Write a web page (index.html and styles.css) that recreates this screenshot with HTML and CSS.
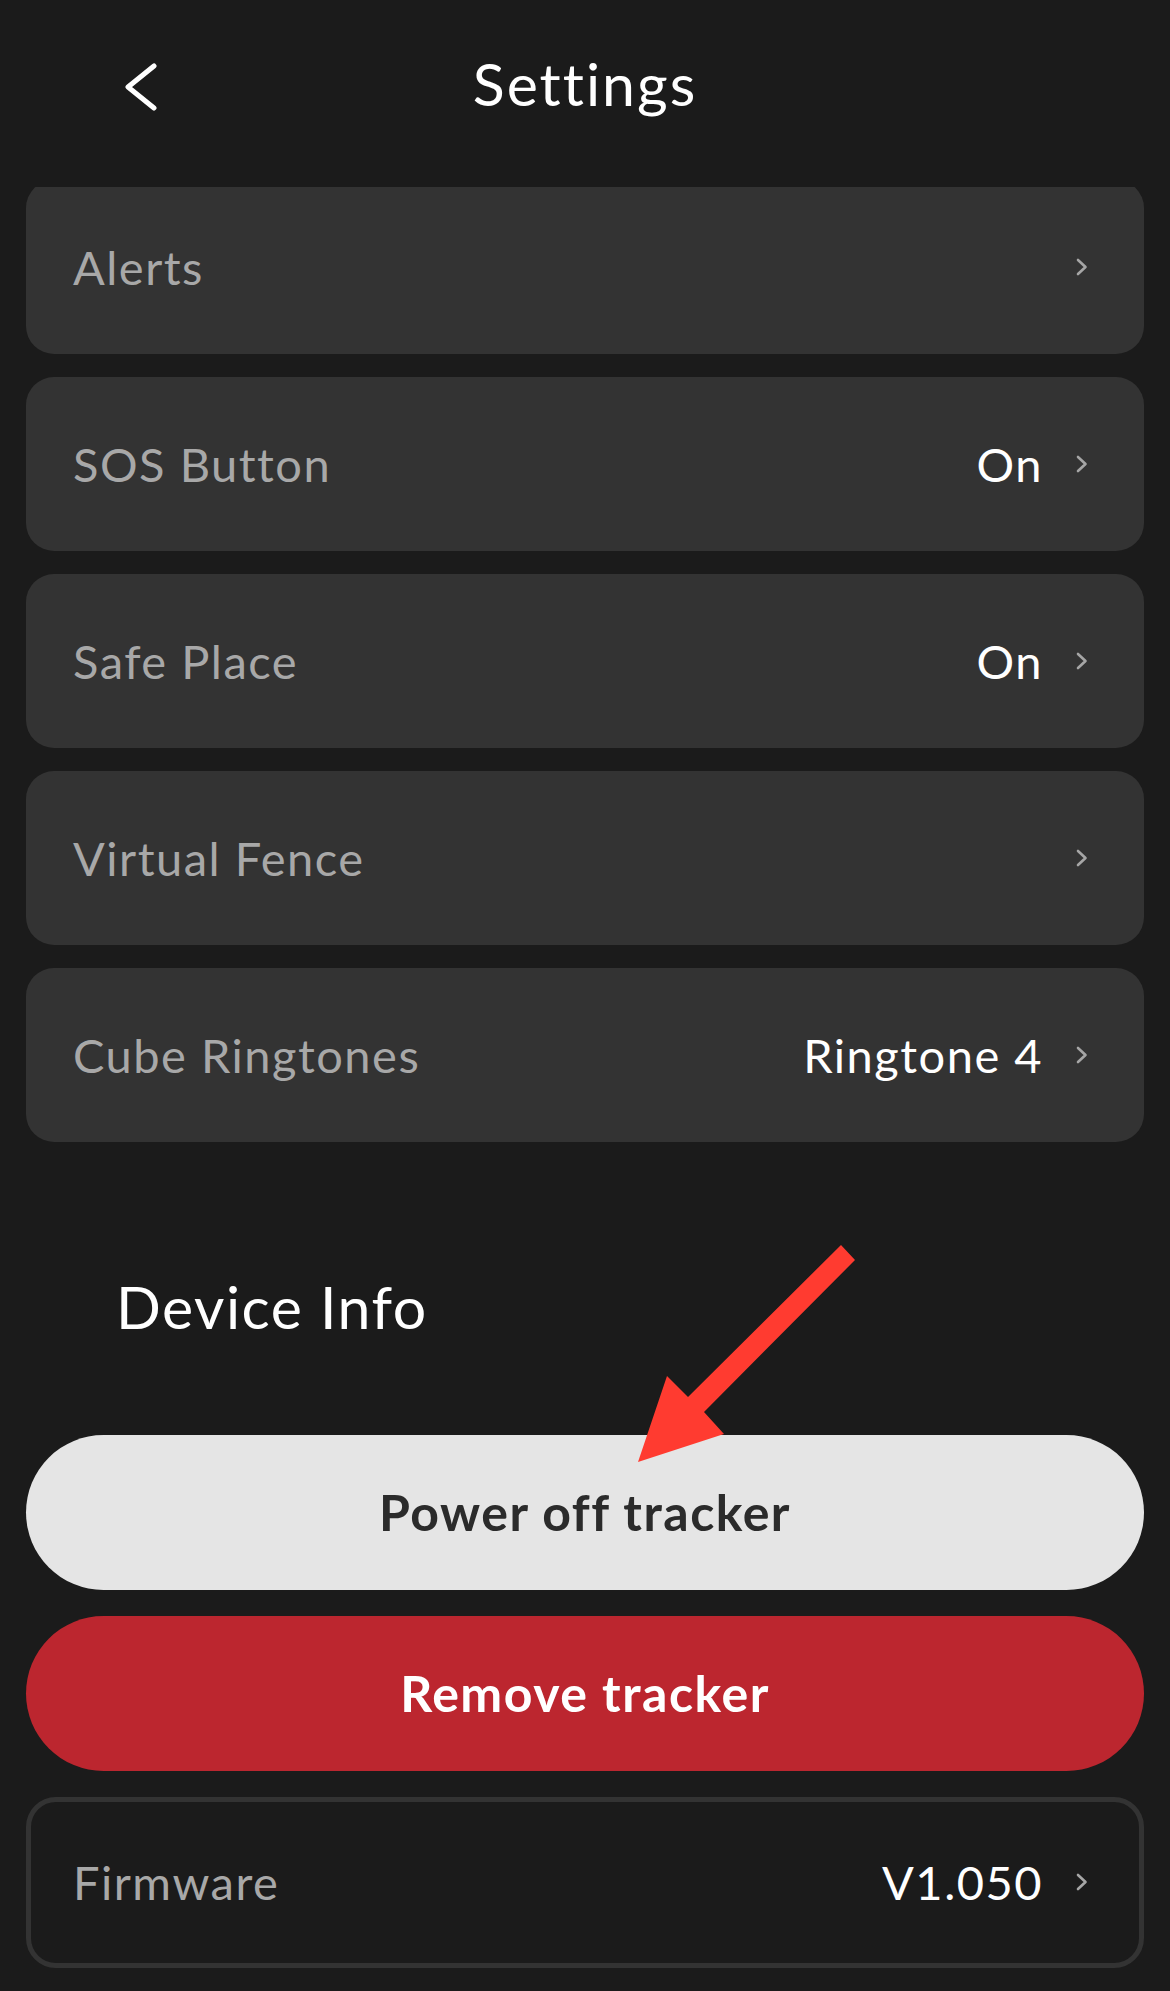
FILE: index.html
```html
<!DOCTYPE html>
<html lang="en">
<head>
  <meta charset="UTF-8">
  <meta name="viewport" content="width=device-width, initial-scale=1.0">
  <title>Settings</title>
  <link rel="stylesheet" href="styles.css">
</head>
<body>
  <header class="topbar">
    <button class="back" aria-label="Back">
      <svg width="36" height="48" viewBox="0 0 36 48">
        <polyline points="30,3 4,24 30,45" fill="none" stroke="#fff" stroke-width="5" stroke-linecap="round" stroke-linejoin="round"/>
      </svg>
    </button>
    <h1>Settings</h1>
    <span></span>
  </header>

  <div class="settings-list">
    <div class="row">
      <span class="label">Alerts</span>
      <span class="chev"></span>
    </div>
    <div class="row">
      <span class="label">SOS Button</span>
      <span class="value">On</span>
      <span class="chev"></span>
    </div>
    <div class="row">
      <span class="label">Safe Place</span>
      <span class="value">On</span>
      <span class="chev"></span>
    </div>
    <div class="row">
      <span class="label">Virtual Fence</span>
      <span class="chev"></span>
    </div>
    <div class="row">
      <span class="label">Cube Ringtones</span>
      <span class="value">Ringtone 4</span>
      <span class="chev"></span>
    </div>
  </div>

  <h2 class="section-title">Device Info</h2>

  <div class="actions">
    <button class="pill pill-light">Power off tracker</button>
    <button class="pill pill-red">Remove tracker</button>
    <div class="row row-outline">
      <span class="label">Firmware</span>
      <span class="value">V1.050</span>
      <span class="chev"></span>
    </div>
  </div>

  <!-- annotation arrow -->
  <svg class="arrow" width="280" height="250" viewBox="0 0 280 250">
    <polygon points="241,15 255,30 104,182 124,204 38,232 67,146 88,167" fill="#ff3b30"/>
  </svg>
</body>
</html>
```

FILE: styles.css
```css
body {
  margin: 0;
  width: 1170px;
  height: 1991px;
  overflow: hidden;
  background-color: #1b1b1b;
  font-family: Lato, "Noto Sans", sans-serif;
  letter-spacing: 1.5px;
  color: #fff;
  position: relative;
}

button {
  font-family: inherit;
  letter-spacing: inherit;
  border: none;
  padding: 0;
  cursor: pointer;
}

.topbar {
  height: 187px;
  box-sizing: border-box;
  padding-top: 49px;
  display: grid;
  grid-template-columns: 1fr auto 1fr;
  align-items: start;
}

.back {
  background: transparent;
  margin-left: 124px;
  margin-top: 14px;
  width: 36px;
  height: 48px;
  justify-self: start;
}

.back svg {
  display: block;
}

.topbar h1 {
  margin: 0;
  font-size: 59px;
  font-weight: 400;
  line-height: 1.2;
  letter-spacing: 2px;
}

.settings-list {
  overflow: hidden;
  display: flex;
  flex-direction: column;
  gap: 23px;
  padding: 0 26px;
}

.settings-list .row:first-child {
  margin-top: -7px;
}

.row {
  height: 174px;
  box-sizing: border-box;
  background-color: #333333;
  border-radius: 28px;
  display: flex;
  align-items: center;
  padding: 0 56px 0 47px;
  font-size: 47px;
}

.label {
  color: #a8a8a8;
  flex: 1;
}

.value {
  color: #fff;
  margin-right: 33px;
}

.chev {
  width: 12px;
  height: 18px;
  background: no-repeat center / contain url("data:image/svg+xml;utf8,<svg xmlns='http://www.w3.org/2000/svg' viewBox='0 0 12 18'><polyline points='2,2 9.5,9 2,16' fill='none' stroke='%23a6a6a6' stroke-width='2.6' stroke-linecap='round' stroke-linejoin='round'/></svg>");
}

.section-title {
  margin: 130px 0 0 116px;
  font-size: 59px;
  font-weight: 400;
  line-height: 1.2;
}

.actions {
  margin-top: 92px;
  padding: 0 26px;
  display: flex;
  flex-direction: column;
  gap: 26px;
}

.pill {
  height: 155px;
  border-radius: 78px;
  font-size: 50px;
  font-weight: 700;
}

.pill-light {
  background-color: #e5e5e5;
  color: #2b2b2b;
}

.pill-red {
  background-color: #bc262f;
  color: #fff;
}

.row-outline {
  height: 171px;
  background-color: transparent;
  border: 5px solid #333333;
  border-radius: 30px;
  padding: 0 51px 0 42px;
}

.arrow {
  position: absolute;
  left: 600px;
  top: 1230px;
}
```
